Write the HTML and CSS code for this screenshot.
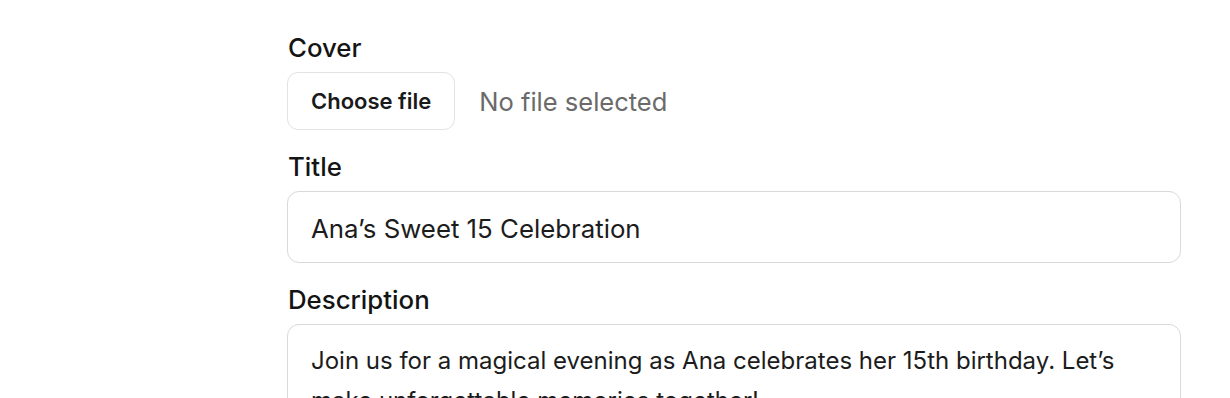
FILE: index.html
```html
<!DOCTYPE html>
<html lang="en">
<head>
<meta charset="utf-8">
<title>Event form</title>
<link rel="stylesheet" href="styles.css">
</head>
<body>
<form class="form">
  <div class="field">
    <label class="label">Cover</label>
    <div class="file-row">
      <span class="file-btn">Choose file</span>
      <span class="file-status">No file selected</span>
    </div>
  </div>
  <div class="field">
    <label class="label">Title</label>
    <div class="input">Ana’s Sweet 15 Celebration</div>
  </div>
  <div class="field">
    <label class="label">Description</label>
    <div class="textarea">Join us for a magical evening as Ana celebrates her 15th birthday. Let’s make unforgettable memories together!</div>
  </div>
</form>
</body>
</html>
```

FILE: styles.css
```css
html, body {
  margin: 0;
  padding: 0;
  background: #ffffff;
  overflow: hidden;
}
body {
  font-family: "Inter", "Liberation Sans", sans-serif;
  color: #1a1a1a;
}
.form {
  width: 894px;
  margin-left: 287px;
  padding-top: 32px;
  display: flex;
  flex-direction: column;
  gap: 21px;
}
.field {
  display: flex;
  flex-direction: column;
  gap: 8px;
}
.label {
  font-size: 25.8px;
  line-height: 32px;
  font-weight: 500;
  color: #141414;
  padding-left: 1px;
}
.file-row {
  display: flex;
  align-items: center;
  gap: 24px;
}
.file-btn {
  box-sizing: border-box;
  height: 58px;
  padding: 0 23px;
  display: flex;
  align-items: center;
  border: 1.5px solid #e3e3e3;
  border-radius: 11px;
  font-size: 22px;
  font-weight: 600;
  color: #1a1a1a;
}
.file-status {
  font-size: 25.5px;
  color: #6a6a6a;
}
.input, .textarea {
  box-sizing: border-box;
  border: 1.5px solid #d9d9d9;
  border-radius: 12px;
  padding: 0 23px;
  color: #1c1c1c;
}
.input {
  height: 72px;
  display: flex;
  align-items: center;
  padding-top: 3px;
  font-size: 25.8px;
}
.textarea {
  padding-top: 16px;
  font-size: 24px;
  line-height: 40px;
  height: 140px;
}
```
